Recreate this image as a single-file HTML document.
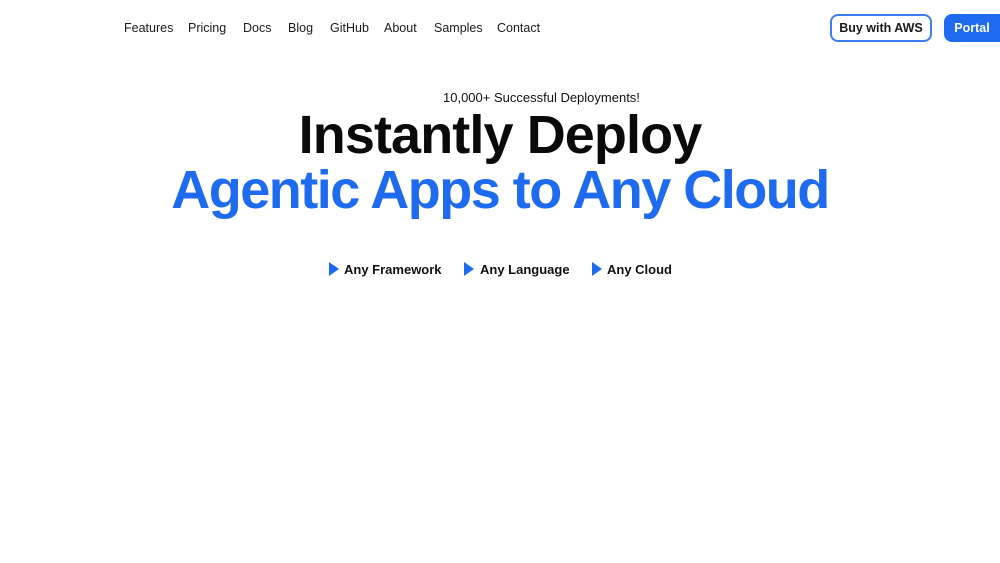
<!DOCTYPE html>
<html><head><meta charset="utf-8"><style>
body{margin:0;width:1000px;height:563px;background:#fff;font-family:"Liberation Sans",Arial,sans-serif;color:#111;position:relative;overflow:hidden}
.nav a{position:absolute;top:21px;font-size:12.5px;color:#1a1a1a;text-decoration:none}
.btn{position:absolute;top:14px;height:28px;box-sizing:border-box;border-radius:8px;font-size:12.5px;font-weight:bold;display:flex;align-items:center;justify-content:center}
.h{position:absolute;left:0;width:1000px;text-align:center;font-weight:bold;white-space:nowrap}
.f{position:absolute;top:262px;font-size:13px;font-weight:bold;color:#111}
.tri{position:absolute;top:262px;width:0;height:0;border-top:7px solid transparent;border-bottom:7px solid transparent;border-left:10px solid #1f6bf0}
</style></head><body>
<div class="nav">
<a style="left:124px">Features</a><a style="left:188px">Pricing</a><a style="left:243px">Docs</a><a style="left:288px">Blog</a><a style="left:330px">GitHub</a><a style="left:384px">About</a><a style="left:434px">Samples</a><a style="left:497px">Contact</a>
</div>
<div class="btn" style="left:830px;width:102px;border:2px solid #3c7ef2;color:#1a1a1a">Buy with AWS</div>
<div class="btn" style="left:944px;width:64px;background:#1f6bf0;color:#fff;padding-right:8px">Portal</div>
<div style="position:absolute;left:443px;top:90px;font-size:13px;color:#111;white-space:nowrap">10,000+ Successful Deployments!</div>
<div class="h" style="top:104px;font-size:54px;letter-spacing:-0.9px;color:#0a0a0a">Instantly Deploy</div>
<div class="h" style="top:159px;font-size:54px;letter-spacing:-1.5px;color:#1f6bf0">Agentic Apps to Any Cloud</div>
<div class="tri" style="left:329px"></div><div class="f" style="left:344px">Any Framework</div>
<div class="tri" style="left:464px"></div><div class="f" style="left:480px">Any Language</div>
<div class="tri" style="left:592px"></div><div class="f" style="left:607px">Any Cloud</div>
</body></html>
